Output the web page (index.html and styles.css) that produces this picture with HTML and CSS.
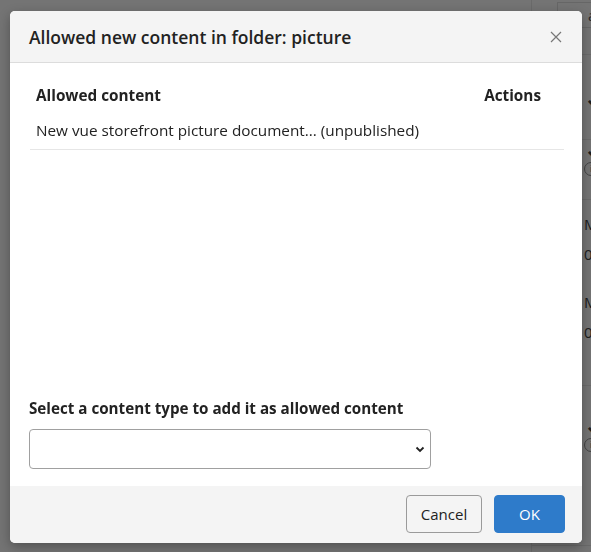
FILE: index.html
```html
<!DOCTYPE html>
<html>
<head>
<meta charset="utf-8">
<link rel="stylesheet" href="styles.css">
</head>
<body>
<div class="page">
  <div class="page-main"></div>
  <div class="page-side">
    <div class="side-top"><span class="side-box">ap</span></div>
    <div class="side-row r1"><span class="chev">&#8964;</span></div>
    <div class="side-row r2"><span class="chev">&#8964;</span><span class="info">i</span></div>
    <div class="side-row r3"><span>M</span><span>0</span></div>
    <div class="side-row r4"><span>M</span><span>0</span></div>
    <div class="side-row r5"></div>
    <div class="side-row r6"><span class="chev">&#8964;</span><span class="info">i</span></div>
  </div>
</div>
<div class="overlay">
  <div class="dialog">
    <div class="dialog-header">
      <h1 class="dialog-title">Allowed new content in folder: picture</h1>
      <button class="close" aria-label="Close">
        <svg width="12" height="12" viewBox="0 0 12 12"><path d="M1 1L11 11M11 1L1 11" stroke="#777" stroke-width="1.2" fill="none"/></svg>
      </button>
    </div>
    <div class="dialog-body">
      <table class="content-table">
        <thead>
          <tr><th class="col-name">Allowed content</th><th class="col-actions">Actions</th></tr>
        </thead>
        <tbody>
          <tr><td>New vue storefront picture document... (unpublished)</td><td></td></tr>
        </tbody>
      </table>
      <div class="add-form">
        <label class="add-label">Select a content type to add it as allowed content</label>
        <div class="select">
          <svg class="select-chev" width="10" height="7" viewBox="0 0 10 7"><path d="M1.5 1.5L5 5L8.5 1.5" stroke="#222" stroke-width="1.8" fill="none"/></svg>
        </div>
      </div>
    </div>
    <div class="dialog-footer">
      <button class="btn btn-cancel">Cancel</button>
      <button class="btn btn-ok">OK</button>
    </div>
  </div>
</div>
</body>
</html>
```
FILE: styles.css
```css
* { box-sizing: border-box; }
html, body { margin: 0; height: 100%; }
body {
  background: #747474;
  font-family: "Open Sans", "Noto Sans", sans-serif;
  color: #222;
  overflow: hidden;
}
.page {
  display: flex;
  height: 552px;
}
.page-main { flex: 1; }
.page-side {
  width: 60px;
  display: flex;
  flex-direction: column;
  border-left: 1px solid #6a6a6a;
  color: #1c1c1c;
  font-size: 15px;
  line-height: 20px;
}
.side-top {
  height: 55px;
  padding: 2px 0 0 25px;
  border-bottom: 1px solid #6a6a6a;
}
.side-box {
  display: block;
  height: 26px;
  border: 1px solid #666;
  border-right: none;
  padding: 2px 0 0 30px;
  color: #2a2a2a;
}
.side-row {
  display: flex;
  flex-direction: column;
  padding-left: 52px;
  border-bottom: 1px solid #6a6a6a;
}
.side-row.r1 { height: 85px; justify-content: center; }
.side-row.r2 { height: 60px; gap: 6px; }
.side-row.r3, .side-row.r4 { height: 78px; gap: 10px; padding-top: 14px; border-bottom: none; }
.side-row.r5 { height: 30px; }
.side-row.r6 { height: 160px; padding-top: 30px; gap: 6px; }
.chev { font-size: 22px; line-height: 16px; height: 16px; font-weight: 700; }
.info {
  width: 14px; height: 14px; border: 1px solid #444; border-radius: 50%;
  font-size: 9px; line-height: 12px; text-align: center; color: #444;
}

.overlay {
  position: fixed;
  inset: 0;
}
.dialog {
  position: absolute;
  left: 10px;
  top: 11px;
  width: 572px;
  height: 532px;
  background: #fff;
  border-radius: 5px;
  overflow: hidden;
  display: flex;
  flex-direction: column;
  box-shadow: 0 4px 12px rgba(0,0,0,0.3);
}
.dialog-header {
  height: 52px;
  flex: none;
  background: #f4f4f4;
  border-bottom: 1px solid #dcdcdc;
  display: flex;
  align-items: center;
  justify-content: space-between;
  padding: 0 20px 0 19px;
}
.dialog-title {
  margin: 0;
  font-size: 17.5px;
  font-weight: 600;
  line-height: 24px;
  color: #222;
}
.close {
  border: none;
  background: none;
  padding: 0;
  width: 12px;
  height: 12px;
  display: flex;
}
.dialog-body {
  flex: 1;
  display: flex;
  flex-direction: column;
  justify-content: space-between;
  padding: 15px 18px 17px 20px;
}
.content-table {
  width: 100%;
  border-collapse: collapse;
  font-size: 15.3px;
}
.content-table th {
  font-weight: 700;
  text-align: left;
  padding: 7px 6px;
  line-height: 20px;
}
.content-table th.col-actions { text-align: right; padding-right: 23px; }
.content-table td {
  padding: 8px 6px 9px;
  line-height: 20px;
  border-bottom: 1px solid #e6e6e6;
}
.add-form {
  display: flex;
  flex-direction: column;
  gap: 11px;
  margin-left: -1px;
}
.add-label {
  font-size: 15.2px;
  font-weight: 700;
  line-height: 20px;
}
.select {
  width: 402px;
  height: 40px;
  border: 1px solid #a0a0a0;
  border-radius: 4px;
  display: flex;
  align-items: center;
  justify-content: flex-end;
  padding-right: 5px;
  background: #fff;
}
.dialog-footer {
  flex: none;
  height: 57px;
  background: #f4f4f4;
  display: flex;
  justify-content: flex-end;
  align-items: flex-start;
  gap: 12px;
  padding: 9px 17px 0 0;
}
.btn {
  height: 38px;
  border-radius: 4px;
  font-family: "Open Sans", "Noto Sans", sans-serif;
  font-size: 15px;
  padding: 0;
  cursor: pointer;
}
.btn-cancel {
  width: 76px;
  background: #f4f4f4;
  border: 1px solid #9a9a9a;
  color: #222;
}
.btn-ok {
  width: 71px;
  background: #2e7bca;
  border: 1px solid #2e7bca;
  color: #fff;
}
```
